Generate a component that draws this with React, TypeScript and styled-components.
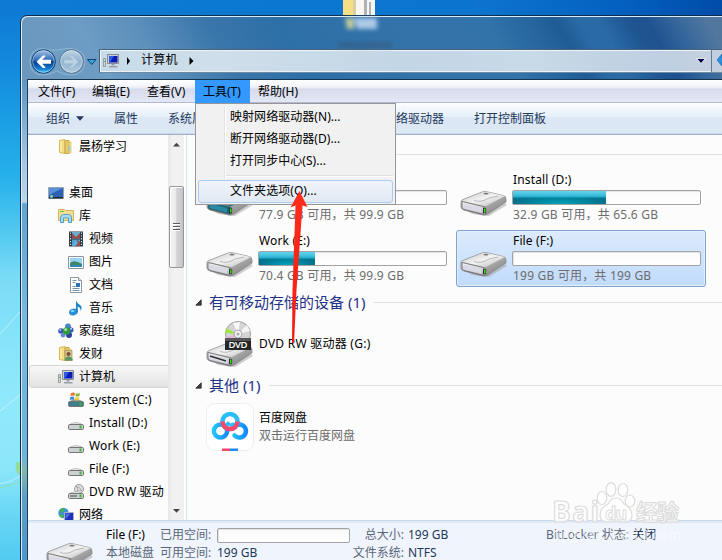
import React from "react";
import styled, { createGlobalStyle, css } from "styled-components";

const Global = createGlobalStyle`
  html, body { margin: 0; padding: 0; }
  body {
    width: 722px; height: 560px; overflow: hidden;
    font-family: "Noto Sans", "Noto Sans CJK SC", sans-serif;
    font-size: 12px; line-height: 16px; color: #000;
  }
  * { box-sizing: border-box; }
  svg { display: block; flex: none; }
`;

/* ---------- desktop and window frame ---------- */

const Desktop = styled.div`
  position: relative;
  width: 722px;
  height: 560px;
  overflow: hidden;
  padding: 15px 0 0 20px;
  background:
    linear-gradient(90deg, #0f7ad4 0, #0b78d2 200px, #0c74ce 480px, #0460c0 620px, #004ca8 722px) 0 0 / 722px 16px no-repeat,
    linear-gradient(180deg, #0f7ad4 0, #1288dc 60px, #1da2e6 130px, #25b0ea 175px, #4cc6f0 225px, #7cdcf7 280px, #86e4fa 340px, #90e8fb 400px, #8ce6fa 470px, #6bd8f6 510px, #52caf2 560px);
`;

const DesktopArt = styled.svg`
  position: absolute;
  left: 0;
  top: 0;
`;

const Window = styled.div`
  position: relative;
  display: flex;
  flex-direction: column;
  width: 720px;
  height: 560px;
  padding-left: 6px;
  border: 1px solid #0d2f4d;
  border-radius: 7px 0 0 0;
  box-shadow: inset 1px 1px 0 #d9ebf7;
  background:
    linear-gradient(180deg, transparent 0, transparent 60px, #a9c8e2 150px, #bdd6ea 186px, #63a3d2 188px, #7ab8e0 300px, #6fb2dd 440px, #7fb8a8 455px, #5f9fca 480px, #4f95c8 545px) 1px 0 / 5px 100% no-repeat,
    linear-gradient(60deg, #6b97bd 16px, #6d9cc4 77px, #5c8fbb 129px, #3a76aa 189px, #2d6fa7 250px, #3473aa 362px, #3273aa 432px, #22609a 484px, #1f5b95 492px, #2a6aa5 512px, #2a6aa5 530px, #1f5592 556px, #1f5290 572px, #33659b 594px, #52779f 624px) 0 0 / 702px 64px no-repeat,
    #5b94bf;
`;

const TitleBar = styled.div`
  flex: none;
  height: 33px;
`;

const AddressRow = styled.div`
  flex: none;
  display: flex;
  height: 31px;
`;

const NavButtons = styled.div`
  width: 72px;
  height: 28px;
  margin-top: -2px;
  padding-left: 1px;
`;

const AddressBox = styled.div`
  display: flex;
  align-items: center;
  width: 613px;
  height: 24px;
  border: 1px solid #46637e;
  border-right-color: #647a90;
  border-bottom-color: #6f8ba3;
  box-shadow: inset 0 1px 0 #eef5fa, inset 1px 0 0 #eef5fa, inset 0 -1px 0 #eaf2f8;
  background: linear-gradient(90deg, #c7dbea 0, #cfdeea 120px, #c3d6e6 300px, #c8d9e7 430px, #bdcfe1 560px, #c5d0df 613px);
`;

const AddressIcon = styled.div`
  width: 22px;
  padding-left: 3px;
`;

const Crumb = styled.div`
  height: 18px;
  line-height: 16px;
  padding: 0 11px 0 11px;
  letter-spacing: 0.2px;
`;

const AddressEnd = styled.div`
  margin-left: auto;
  padding: 0 5px 0 0;
`;

const RefreshBox = styled.div`
  flex: 1;
  height: 24px;
  border-top: 1px solid #46637e;
  border-bottom: 1px solid #6f8ba3;
  background: #c3cfde;
  padding: 4px 0 0 5px;
`;

const Client = styled.div`
  flex: 1;
  display: flex;
  flex-direction: column;
  margin-top: -1px;
  border-left: 1px solid #1b405f;
  border-top: 1px solid #16324b;
  background: #fcfcfc;
`;

/* ---------- menu bar and toolbar ---------- */

const MenuBar = styled.div`
  flex: none;
  display: flex;
  height: 23px;
  padding-left: 2px;
  border-bottom: 1px solid #b3b9d2;
  background: linear-gradient(180deg, #fff 0, #f3f5fa 6px, #e9ecf5 8px, #d6dbec 9px, #dde1f0 16px, #e4e7f5 22px);
`;

const MenuEntry = styled.div<{ $w: number; $open?: boolean }>`
  position: relative;
  width: ${(p) => p.$w}px;
  height: 23px;
  padding-left: 8px;
  line-height: 24px;
  white-space: nowrap;
  background: ${(p) => (p.$open ? "#3399ff" : "transparent")};
`;

const Dropdown = styled.div`
  position: absolute;
  z-index: 5;
  left: 0;
  top: 23px;
  width: 201px;
  height: 102px;
  padding: 3px 2px;
  border: 1px solid #979797;
  background:
    linear-gradient(90deg, #e2e3e3 50%, #fff 50%) 28px 2px / 2px 96px no-repeat,
    #f1f1f1;
`;

const DropItem = styled.div<{ $hot?: boolean }>`
  height: 22px;
  padding-left: 32px;
  line-height: 20px;
  letter-spacing: 0.05px;
  ${(p) =>
    p.$hot &&
    css`
      height: 23px;
      padding-left: 31px;
      line-height: 19px;
      border: 1px solid #a8cdf0;
      border-radius: 3px;
      background: linear-gradient(180deg, rgba(240,245,252,.8), rgba(221,231,243,.8));
    `}
`;

const DropLine = styled.div`
  height: 2px;
  margin: 2px 0 3px 28px;
  border-top: 1px solid #e0e0e0;
  background: #fff;
`;

const Toolbar = styled.div`
  flex: none;
  display: flex;
  align-items: center;
  height: 32px;
  padding: 0 0 0 18px;
  color: #1e395b;
  border-bottom: 1px solid #a0afc3;
  box-shadow: inset 0 -1px 0 #c9d8ec;
  background: linear-gradient(180deg, #fdfeff 0, #eef5fc 8px, #e5effa 14px, #dce6f4 15px, #dde8f5 30px);
`;

const Tool = styled.div<{ $w: number }>`
  display: flex;
  align-items: center;
  gap: 6px;
  width: ${(p) => p.$w}px;
  white-space: nowrap;
`;

/* ---------- navigation tree ---------- */

const Body = styled.div`
  flex: none;
  display: flex;
  height: 385px;
`;

const Tree = styled.div`
  width: 140px;
  height: 385px;
  overflow: hidden;
`;

const TreeRow = styled.div<{ $level: number; $selected?: boolean; $gap?: number }>`
  display: flex;
  align-items: center;
  gap: 5px;
  width: 160px;
  height: 23px;
  margin-left: 1px;
  margin-bottom: ${(p) => p.$gap || 0}px;
  padding-left: ${(p) => 8 + p.$level * 10}px;
  white-space: nowrap;
  border: 1px solid transparent;
  ${(p) =>
    p.$selected &&
    css`
      border-color: #d5d5d5;
      border-radius: 3px;
      background: linear-gradient(180deg, #f7f7f7, #e3e3e3);
    `}
`;

const TreeText = styled.span<{ $ls?: number }>`
  letter-spacing: ${(p) => p.$ls || 0}px;
`;

const ScrollTrack = styled.div`
  display: flex;
  flex-direction: column;
  align-items: center;
  width: 16px;
  padding: 7px 0 3px;
  background: linear-gradient(90deg, #e8e8e8, #f2f2f2 5px, #f0f0f0);
`;

const Thumb = styled.div`
  display: flex;
  flex-direction: column;
  justify-content: center;
  align-items: center;
  gap: 1px;
  width: 15px;
  height: 82px;
  margin: 39px 0 auto;
  border: 1px solid #969696;
  border-radius: 2px;
  background: linear-gradient(90deg, #f5f5f5 0, #e9e9ea 45%, #d6d6d9 50%, #c4c5c9 100%);
  box-shadow: inset 1px 1px 0 #fff;
`;

const Grip = styled.div`
  width: 7px;
  height: 2px;
  border-top: 1px solid #5b5b5b;
  background: #fff;
`;

const Splitter = styled.div`
  width: 3px;
  border-right: 1px solid #d3e2f3;
  background: #fff;
`;

/* ---------- file list ---------- */

const Main = styled.div`
  flex: 1;
  display: flex;
  flex-direction: column;
  min-width: 0;
  padding: 9px 0 0 8px;
`;

const Group = styled.div<{ $mt?: number }>`
  display: flex;
  align-items: center;
  height: 20px;
  margin-top: ${(p) => p.$mt || 0}px;
`;

const GroupTitle = styled.div<{ $w: number }>`
  width: ${(p) => p.$w}px;
  padding-left: 7px;
  font-size: 15px;
  line-height: 20px;
  color: #1e3287;
  white-space: nowrap;
`;

const Rule = styled.div`
  flex: 1;
  height: 1px;
  background: #e2e2e2;
`;

const Tiles = styled.div`
  display: grid;
  grid-template-columns: 250px 250px;
  grid-auto-rows: 57px;
  gap: 4px;
  margin: 5px 0 0 7px;
`;

const Tile = styled.div<{ $selected?: boolean }>`
  display: flex;
  padding: 1px 0 0 3px;
  border: 1px solid transparent;
  ${(p) =>
    p.$selected &&
    css`
      border-color: #7da2ce;
      border-radius: 3px;
      box-shadow: inset 0 0 0 1px #e4effd;
      background: linear-gradient(180deg, #dcebfc, #c1dbfc);
    `}
`;

const TileIcon = styled.div`
  width: 52px;
  padding-top: 18px;
`;

const TileInfo = styled.div`
  display: flex;
  flex-direction: column;
  white-space: nowrap;
`;

const TileName = styled.div`
  height: 19px;
  line-height: 17px;
  padding-left: 1px;
  letter-spacing: 0.15px;
`;

const Bar = styled.div<{ $w: number }>`
  width: ${(p) => p.$w}px;
  height: 15px;
  border: 1px solid #a3a3a3;
  border-radius: 2px;
  background: linear-gradient(180deg, #fafafa, #fff);
  box-shadow: inset 1px 1px 0 #e4e4e4;
`;

const Fill = styled.div`
  height: 13px;
  background:
    radial-gradient(ellipse 50% 60% at 50% 100%, rgba(0,170,195,.9), transparent),
    linear-gradient(180deg, #62d3ec 0, #4bc5e2 3px, #23adcc 6px, #047690 7px, #066f8b 13px);
`;

const TileSub = styled.div`
  line-height: 20px;
  padding-left: 1px;
  letter-spacing: 0.2px;
  color: #6d6d6d;
`;

const WideItem = styled.div<{ $h: number; $mt: number }>`
  display: flex;
  align-items: center;
  gap: 5px;
  height: ${(p) => p.$h}px;
  margin: ${(p) => p.$mt}px 0 0 11px;
  white-space: nowrap;
`;

const Muted = styled.div`
  color: #6d6d6d;
  line-height: 18px;
`;

const PanLabel = styled.div<{ $ls?: number }>`
  line-height: 18px;
  letter-spacing: ${(p) => p.$ls || 0}px;
`;

/* ---------- details pane ---------- */

const Details = styled.div`
  flex: none;
  display: flex;
  height: 60px;
  padding-left: 18px;
  border-top: 1px solid #c9d8ea;
  box-shadow: inset 0 2px 0 #e1eaf5;
  background: #f0f4fc;
`;

const DetailIcon = styled.div`
  width: 60px;
  padding-top: 20px;
`;

const DetailGrid = styled.div`
  display: grid;
  grid-template-columns: 54px 57px 135px 56px 138px auto;
  grid-template-rows: 18px 18px;
  padding-top: 5px;
  align-items: center;
  color: #1e395b;
  white-space: nowrap;
`;

const Label = styled.span<{ $right?: boolean }>`
  color: #5a6779;
  text-align: ${(p) => (p.$right ? "right" : "left")};
  padding-right: ${(p) => (p.$right ? 4 : 0)}px;
`;

const Dark = styled.span`
  color: #000;
`;

const Overlay = styled.svg`
  position: absolute;
  left: 0;
  top: 0;
  z-index: 10;
`;

/* ---------- icons ---------- */

const DriveIcon = ({ windows }: { windows?: boolean }) => (
  <svg width="47" height="28" viewBox="0 0 47 28">
    <defs>
      <linearGradient id="dtop" x1="0" y1="0" x2="1" y2="1">
        <stop offset="0" stopColor="#c8c8c8" />
        <stop offset=".5" stopColor="#f3f3f3" />
        <stop offset="1" stopColor="#b5b5b5" />
      </linearGradient>
      <linearGradient id="dside" x1="0" y1="0" x2="1" y2="1">
        <stop offset="0" stopColor="#ededed" />
        <stop offset="1" stopColor="#757575" />
      </linearGradient>
      <linearGradient id="dfront" x1="0" y1="0" x2="0" y2="1">
        <stop offset="0" stopColor="#f8f8fb" />
        <stop offset="1" stopColor="#b4b4be" />
      </linearGradient>
    </defs>
    <path d="M4 20 24 26 45 14 47 16 29 27 12 25Z" fill="#9a9a9a" opacity=".45" />
    <path d="M1 13 Q1 11 3 10.500 L22 3 Q25 2 28 3 L43 6.500 Q46 7 46 10 L46 13 28 25 Q26 26.500 23 26 L4 21 Q1 20 1 18Z" fill="url(#dside)" stroke="#8a8a8a" strokeWidth=".8" />
    <path d="M2 11.500 23 3 Q25 2.500 27 3 L45 7 27 16.500 Q25 17.500 22 16.800Z" fill={windows ? "#257788" : "url(#dtop)"} />
    <path d="M14 11.500Q21 14 29 9L38 7" stroke="#aaa" fill="none" strokeWidth=".8" />
    <ellipse cx="26" cy="4.600" rx="2.600" ry=".9" fill="#777" />
    <path d="M2 12.500 22 17.200 Q26 18 26 20 L25.500 24.500 Q25 25.500 22 25 L4 20.500 Q2 20 2 18Z" fill={windows ? "#17647a" : "url(#dfront)"} stroke="#666" strokeWidth=".8" />
    <path d="M3.500 14.500 21 19 21 23.500 5 19.500 Q3.500 19 3.500 17.500Z" fill={windows ? "#278aa2" : "#dadae6"} />
    <path d="M23 18.500 26 19.200 26 24 23 24.200Z" fill="#303030" />
    <path d="M24 19.500h1.500v4H24z" fill="#35e20c" />
  </svg>
);

const DvdIcon = () => (
  <svg width="48" height="47" viewBox="0 0 48 47">
    <g transform="translate(0 20)">
      <DriveIcon />
    </g>
    <path d="M4 36 20 41" stroke="#333" strokeWidth="1.500" />
    <circle cx="32" cy="14" r="12.500" fill="#d4d4d4" stroke="#a0a0a0" />
    <path d="M32 14 20 8 19 13Z" fill="#a3e34d" />
    <path d="M32 14 20 17 23 22Z" fill="#e5b6dd" />
    <path d="M32 14 41 5 44 11Z" fill="#f5f5f5" />
    <path d="M32 14 27 3 34 2Z" fill="#f8f8f8" />
    <circle cx="32" cy="14" r="4" fill="#f0f0f0" stroke="#999" strokeWidth=".8" />
    <circle cx="32" cy="14" r="1.500" fill="#aaa" />
    <path d="M19 18h26v12H19z" fill="#262626" />
    <path d="M19 18h26v3H19z" fill="#555" />
    <text x="32" y="27.500" textAnchor="middle" fontSize="9.500" fontWeight="600" fill="#fff" fontFamily="Open Sans, sans-serif" textLength="19">DVD</text>
  </svg>
);

const PanIcon = () => (
  <svg width="48" height="48" viewBox="0 0 48 48">
    <defs>
      <linearGradient id="pb" x1="0" x2="1">
        <stop offset="0" stopColor="#25c4fa" />
        <stop offset="1" stopColor="#168bf8" />
      </linearGradient>
    </defs>
    <rect x=".5" y=".5" width="47" height="47" rx="8" fill="#fff" stroke="#ededed" />
    <g fill="none" strokeWidth="4.500" strokeLinecap="round">
      <circle cx="14.500" cy="28" r="6.600" stroke="url(#pb)" />
      <path d="M19 24 22 21" stroke="#25bdfa" />
      <path d="M26 22 34 21.400A6.600 6.600 0 1 1 28.500 32.500" stroke="url(#pb)" />
      <circle cx="24" cy="18.500" r="7.500" stroke="#2dbcfa" />
      <path d="M16.500 18.500A7.500 7.500 0 0 0 31.500 18.500" stroke="#f7496f" strokeLinecap="butt" />
    </g>
    <path d="M16 45.500h8V48h-8z" fill="#fb456b" />
    <path d="M24 45.500h8V48h-8z" fill="#1c8cf8" />
  </svg>
);

const Svg16 = ({ children }: { children: React.ReactNode }) => (
  <svg width="16" height="16" viewBox="0 0 16 16">{children}</svg>
);

const FolderIcon = ({ person }: { person?: boolean }) => (
  <Svg16>
    <path d="M1.500 1.500 7 .5 7 14.500 1.500 13.500Z" fill="#f3dc82" stroke="#d7b956" />
    <path d="M7 1.500h4v13H7z" fill="#e7c969" stroke="#c9a94c" />
    <path d="M3 2v11" stroke="#fff3b8" />
    <path d="M11 3h2v11h-2z" fill="#f5e397" stroke="#d7b956" strokeWidth=".6" />
    {person ? (
      <>
        <path d="M7 4.500h7v10H7z" fill="#d3c596" stroke="#a49262" strokeWidth=".7" />
        <circle cx="10.500" cy="8" r="2" fill="#7c5030" />
        <path d="M7 14.500Q7 10.500 10.500 10.500T15 14.500Z" fill="#579a60" />
      </>
    ) : (
      <path d="M11.500 7v5" stroke="#8ed0ea" strokeWidth="1.500" />
    )}
  </Svg16>
);

const ComputerIcon = () => (
  <Svg16>
    <path d="M.5 5.500h2v8h-2z" fill="#d5d8d2" stroke="#8c918c" strokeWidth=".8" />
    <path d="M1 8.500h1" stroke="#33c234" />
    <path d="M4.500 1.500h11v9h-11z" fill="#c9ccd2" stroke="#868b94" />
    <path d="M6 3h8.500v6.500H6z" fill="#0a1bb5" />
    <path d="M6 3h5L7 9.500H6z" fill="#2e5be2" />
    <path d="M8.500 11h3v1.500h-3zM6 13h8.500v1.500H6z" fill="#9a9da3" />
  </Svg16>
);

const DesktopIcon = () => (
  <Svg16>
    <path d="M.5 2.500h15v11H.5z" fill="#2d61b4" stroke="#9aa3b0" />
    <path d="M1 3h14L1 10z" fill="#5790d8" />
    <path d="M1 12h14v1.500H1z" fill="#202a35" />
    <circle cx="3.500" cy="11.500" r="1.700" fill="#4fb1e2" />
    <path d="M3 10.500h1.500V12H3z" fill="#e8ca35" />
  </Svg16>
);

const LibraryIcon = () => (
  <Svg16>
    <path d="M.5 1.500h6l1 1h8v10H.5z" fill="#f2df96" stroke="#cfb45b" />
    <path d="M2 3.500h4" stroke="#69bd46" />
    <path d="M2.500 14.500V10Q3 6.500 5.500 6.500h5Q13.500 6.500 13.500 10v4.500h-3V10h-5v4.500z" fill="#a9dcf4" stroke="#4d9ec6" />
  </Svg16>
);

const VideoIcon = () => (
  <Svg16>
    <path d="M1 .5h14v15H1z" fill="#2b3742" />
    <path d="M4 1h8v6.500H4z" fill="#6faed4" />
    <path d="M4 8.500h8V15H4z" fill="#5aa0cd" />
    <path d="M4 2 8 6 12 2V7.500H4zM9 9 12 11V15H6z" fill="#9c4c48" />
    <path d="M8 9 10 12 7 15H4z" fill="#4eb6ea" />
    <path d="M2.500 1.500v13M13.500 1.500v13" stroke="#dde4e8" strokeWidth="1.200" strokeDasharray="1.300 1.500" />
  </Svg16>
);

const PictureIcon = () => (
  <Svg16>
    <path d="M.5 2.500h15v12H.5z" fill="#fff" stroke="#8b949c" />
    <path d="M2 4h12v9H2z" fill="#9ad3f1" />
    <path d="M2 9Q6 5 14 10v3H2z" fill="#3f8767" />
    <path d="M2 11h12v2H2z" fill="#2e87b8" />
  </Svg16>
);

const DocIcon = () => (
  <Svg16>
    <path d="M2.500 .5h8l3 3v12h-11z" fill="#fff" stroke="#8d979f" />
    <path d="M10.500 .5v3h3" fill="#dfe6ea" stroke="#8d979f" />
    <path d="M4.500 3.500h4M4.500 5.500h3M4.500 9.500h3M4.500 11.500h7M4.500 13.500h7" stroke="#7795ad" />
    <path d="M8 6h4v4H8z" fill="#2a74b7" />
  </Svg16>
);

const MusicIcon = () => (
  <Svg16>
    <ellipse cx="5.500" cy="12" rx="4.500" ry="3.300" fill="#2b8fd8" transform="rotate(-15 5.500 12)" />
    <path d="M8 12V.5Q9 3.500 12 5 15 7 12.500 11 13 7.500 9.700 6.500V12z" fill="#1c83cf" />
    <ellipse cx="4.500" cy="11" rx="2" ry="1" fill="#8fd3f7" />
  </Svg16>
);

const HomegroupIcon = () => (
  <Svg16>
    <circle cx="3" cy="8" r="2.800" fill="#3a55b8" />
    <circle cx="10" cy="3.500" r="3" fill="#4e86c9" />
    <circle cx="12.700" cy="7" r="2.800" fill="#3558b2" />
    <circle cx="11" cy="12" r="3" fill="#2c429d" />
    <circle cx="5" cy="12.300" r="2.300" fill="#6689cc" />
    <circle cx="8.500" cy="8" r="3.700" fill="#2f9b3d" />
    <circle cx="7.700" cy="6.600" r="1.500" fill="#a7e2a2" />
    <circle cx="2.300" cy="7" r="1" fill="#b6c8f0" />
    <circle cx="13" cy="5.800" r="1" fill="#bfd2f5" />
  </Svg16>
);

const SmallDrive = ({ kind }: { kind?: "win" | "dvd" }) => (
  <Svg16>
    {kind === "dvd" && (
      <>
        <circle cx="11" cy="5" r="4.500" fill="#dcdcdc" stroke="#888" strokeWidth=".8" />
        <path d="M11 5 8 2M11 5l3 2M11 5l-3 3" stroke="#929292" />
        <circle cx="11" cy="5" r="1.300" fill="#fff" stroke="#888" strokeWidth=".6" />
      </>
    )}
    <path d="M3 8.500Q8 6.500 13 8.500L15 10.500H1z" fill={kind === "win" ? "#6c9da4" : "#e6e6e6"} stroke="#a4a4a4" strokeWidth=".6" />
    <rect x=".5" y="9.500" width="15" height="5" rx="1.200" fill={kind === "win" ? "#3f7f8c" : "#cfcfd6"} stroke="#747474" />
    {kind === "dvd" && <path d="M2 12h7" stroke="#444" />}
    <path d="M11.500 10.500h2v3h-2z" fill="#3fb52b" />
    {kind === "win" && (
      <>
        <path d="M3 1Q5 0 7 1L6.500 4Q4.500 3 2.500 4z" fill="#ee7132" />
        <path d="M8 1.200Q10 2 12 1L11.400 4Q9.500 5 7.500 4.200z" fill="#80b93a" />
        <path d="M2.300 5Q4.300 4 6.300 5L5.800 8Q3.800 7 1.800 8z" fill="#3c8cd3" />
        <path d="M7.300 5.200Q9.300 6 11.300 5L10.700 8Q8.700 9 6.700 8.200z" fill="#f3c62e" />
      </>
    )}
  </Svg16>
);

const NetworkIcon = () => (
  <Svg16>
    <circle cx="5.500" cy="6" r="5.200" fill="#3f8fe0" />
    <path d="M2 3Q5 0 7 2L5 5 3 6Zm-1 5 3-1 2 3-2 1Z" fill="#44b63f" />
    <path d="M6.500 5.500h9v8h-9z" fill="#1e2fbb" stroke="#aab1c0" />
    <path d="M7.500 6.500h5l-5 6z" fill="#4b71e6" />
    <path d="M8 14h6v1.500H8z" fill="#7d828c" />
  </Svg16>
);

const Nav = () => (
  <svg width="71" height="30" viewBox="0 0 71 30">
    <defs>
      <linearGradient id="nb" x1="0" y1="0" x2="0" y2="1">
        <stop offset="0" stopColor="#a9c6e6" />
        <stop offset=".45" stopColor="#2c69b4" />
        <stop offset=".52" stopColor="#083e8e" />
        <stop offset=".8" stopColor="#1479cf" />
        <stop offset="1" stopColor="#4fd4fb" />
      </linearGradient>
      <linearGradient id="nf" x1="0" y1="0" x2="0" y2="1">
        <stop offset="0" stopColor="#c3d6e6" />
        <stop offset=".5" stopColor="#8fb2cd" />
        <stop offset="1" stopColor="#b3cde0" />
      </linearGradient>
    </defs>
    <path d="M2 15Q2 1.500 15 1.500Q22 4 29 3Q36 1.500 43 1.500Q58 3 57 15Q56 28 43 28Q36 28 29 24Q22 28 15 28Q2 28 2 15Z" fill="#6f9cc1" stroke="#8fb5d3" />
    <circle cx="15.500" cy="14.500" r="11.800" fill="url(#nb)" stroke="#123e71" />
    <circle cx="15.500" cy="14.500" r="10.800" fill="none" stroke="#b9dcf5" strokeOpacity=".6" />
    <path d="M8.500 14.800 14.800 8.600 17.300 8.600 17.300 9.500 14.200 12.800H23V16.800H14.200L17.300 20.100V21H14.800Z" fill="#fff" />
    <circle cx="43.500" cy="14.500" r="11.800" fill="url(#nf)" stroke="#4f7294" />
    <circle cx="43.500" cy="14.500" r="10.800" fill="none" stroke="#d4e4ef" strokeOpacity=".7" />
    <path d="M50.500 14.800 44.200 8.600H41.700V9.500L44.800 12.800H36V16.800H44.800L41.700 20.100V21H44.200Z" fill="#bcd2e2" stroke="#9bb8cf" strokeWidth=".6" />
    <path d="M59.500 12.500H68L63.700 17.500Z" fill="#3ba5dd" stroke="#0d4470" />
  </svg>
);

const CrumbArrow = () => (
  <svg width="5" height="8" viewBox="0 0 5 8">
    <path d="M.5 0 4.500 4 .5 8Z" fill="#000" />
  </svg>
);

const GroupArrow = () => (
  <svg width="7" height="7" viewBox="0 0 7 7">
    <path d="M6.200 .8V6.200H.8Z" fill="#404040" stroke="#262626" strokeWidth=".8" />
  </svg>
);

const tree = [
  { icon: <FolderIcon />, text: "晨杨学习", level: 2, gap: 23 },
  { icon: <DesktopIcon />, text: "桌面", level: 1 },
  { icon: <LibraryIcon />, text: "库", level: 2 },
  { icon: <VideoIcon />, text: "视频", level: 3 },
  { icon: <PictureIcon />, text: "图片", level: 3 },
  { icon: <DocIcon />, text: "文档", level: 3 },
  { icon: <MusicIcon />, text: "音乐", level: 3 },
  { icon: <HomegroupIcon />, text: "家庭组", level: 2 },
  { icon: <FolderIcon person />, text: "发财", level: 2 },
  { icon: <ComputerIcon />, text: "计算机", level: 2, selected: true },
  { icon: <SmallDrive kind="win" />, text: "system (C:)", level: 3 },
  { icon: <SmallDrive />, text: "Install (D:)", level: 3 },
  { icon: <SmallDrive />, text: "Work (E:)", level: 3 },
  { icon: <SmallDrive />, text: "File (F:)", level: 3 },
  { icon: <SmallDrive kind="dvd" />, text: "DVD RW 驱动", level: 3 },
  { icon: <NetworkIcon />, text: "网络", level: 2 },
];

const drives = [
  { name: "", used: 22, sub: "77.9 GB 可用，共 99.9 GB", windows: true },
  { name: "Install (D:)", used: 49.5, sub: "32.9 GB 可用，共 65.6 GB" },
  { name: "Work (E:)", used: 30, sub: "70.4 GB 可用，共 99.9 GB" },
  { name: "File (F:)", used: 0, sub: "199 GB 可用，共 199 GB", selected: true },
];

export default function App() {
  return (
    <Desktop>
      <Global />
      <DesktopArt width="722" height="560" viewBox="0 0 722 560">
        <path d="M343 0h11v16h-11z" fill="#f6df83" />
        <path d="M353 0h22v16h-22z" fill="#f7f6f1" />
        <path d="M353 0h3v16h-3z" fill="#d8cfa6" />
        <path d="M364 0h3v16h-3zM369 2h2v14h-2z" fill="#aeb2b8" />
        <path d="M0 334 20 312M0 411 20 395M0 484Q12 482 20 476" stroke="#d2f6ff" strokeOpacity=".7" fill="none" />
        <path d="M0 488 20 482M17 462Q14 470 20 475V463Z" stroke="#8fdcae" fill="#98dc86" />
      </DesktopArt>
      <Window>
        <TitleBar />
        <AddressRow>
          <NavButtons><Nav /></NavButtons>
          <AddressBox>
            <AddressIcon><ComputerIcon /></AddressIcon>
            <svg width="8" height="8" viewBox="0 0 8 8"><path d="M5 0 8 4 5 8Z" /></svg>
            <Crumb>计算机</Crumb>
            <CrumbArrow />
            <AddressEnd>
              <svg width="10" height="6" viewBox="0 0 10 6"><path d="M.5 .5H9.500L5 5.500Z" fill="#05054d" stroke="#fff" strokeWidth=".8" /></svg>
            </AddressEnd>
          </AddressBox>
          <RefreshBox>
            <svg width="16" height="14" viewBox="0 0 16 14"><path d="M0 6 5 0V4H9V8H5V12Z" fill="#2b8fdc" stroke="#1767a8" strokeWidth=".7" /></svg>
          </RefreshBox>
        </AddressRow>
        <Client>
          <MenuBar>
            <MenuEntry $w={54}>文件(F)</MenuEntry>
            <MenuEntry $w={55}>编辑(E)</MenuEntry>
            <MenuEntry $w={56}>查看(V)</MenuEntry>
            <MenuEntry $w={55} $open>
              工具(T)
              <Dropdown>
                <DropItem>映射网络驱动器(N)...</DropItem>
                <DropItem>断开网络驱动器(D)...</DropItem>
                <DropItem>打开同步中心(S)...</DropItem>
                <DropLine />
                <DropItem $hot>文件夹选项(O)...</DropItem>
              </Dropdown>
            </MenuEntry>
            <MenuEntry $w={60}>帮助(H)</MenuEntry>
          </MenuBar>
          <Toolbar>
            <Tool $w={68}>
              组织
              <svg width="8" height="5" viewBox="0 0 8 5"><path d="M0 .3H8L4 4.800Z" fill="#1e395b" /></svg>
            </Tool>
            <Tool $w={54}>属性</Tool>
            <Tool $w={192}>系统属性</Tool>
            <Tool $w={114}>映射网络驱动器</Tool>
            <Tool $w={90}>打开控制面板</Tool>
          </Toolbar>
          <Body>
            <Tree>
              {tree.map((t) => (
                <TreeRow key={t.text} $level={t.level} $gap={t.gap} $selected={t.selected}>
                  {t.icon}
                  <TreeText $ls={/[a-z]/i.test(t.text) ? 0.15 : 0}>{t.text}</TreeText>
                </TreeRow>
              ))}
            </Tree>
            <ScrollTrack>
              <svg width="7" height="5" viewBox="0 0 7 5"><path d="M0 4.500 3.500 .8 7 4.500Z" fill="#444" /></svg>
              <Thumb><Grip /><Grip /><Grip /></Thumb>
              <svg width="7" height="8" viewBox="0 0 7 8"><path d="M0 0H7L3.500 3.800Z" fill="#444" /></svg>
            </ScrollTrack>
            <Splitter />
            <Main>
              <Group><Rule /></Group>
              <Tiles>
                {drives.map((d, i) => (
                  <Tile key={i} $selected={d.selected}>
                    <TileIcon><DriveIcon windows={d.windows} /></TileIcon>
                    <TileInfo>
                      <TileName>{d.name}</TileName>
                      <Bar $w={189}>{d.used > 0 && <Fill style={{ width: `${d.used}%` }} />}</Bar>
                      <TileSub>{d.sub}</TileSub>
                    </TileInfo>
                  </Tile>
                ))}
              </Tiles>
              <Group $mt={5}>
                <GroupArrow />
                <GroupTitle $w={172}>有可移动存储的设备 (1)</GroupTitle>
                <Rule />
              </Group>
              <WideItem $h={47} $mt={8}>
                <DvdIcon />
                <PanLabel $ls={0.25}>DVD RW 驱动器 (G:)</PanLabel>
              </WideItem>
              <Group $mt={8}>
                <GroupArrow />
                <GroupTitle $w={67}>其他 (1)</GroupTitle>
                <Rule />
              </Group>
              <WideItem $h={48} $mt={8}>
                <PanIcon />
                <div>
                  <PanLabel>百度网盘</PanLabel>
                  <Muted>双击运行百度网盘</Muted>
                </div>
              </WideItem>
            </Main>
          </Body>
          <Details>
            <DetailIcon><DriveIcon /></DetailIcon>
            <DetailGrid>
              <Dark>File (F:)</Dark>
              <Label>已用空间:</Label>
              <Bar $w={133} />
              <Label $right>总大小:</Label>
              <span>199 GB</span>
              <span><Label>BitLocker 状态: </Label>关闭</span>
              <Label>本地磁盘</Label>
              <Label>可用空间:</Label>
              <span>199 GB</span>
              <Label $right>文件系统:</Label>
              <span>NTFS</span>
            </DetailGrid>
          </Details>
        </Client>
      </Window>
      <Overlay width="722" height="560" viewBox="0 0 722 560">
        <defs>
          <filter id="soft" x="-30%" y="-30%" width="160%" height="160%"><feGaussianBlur stdDeviation="2" /></filter>
          <linearGradient id="red" x1="0" y1="0" x2="0" y2="1">
            <stop offset="0" stopColor="#ff2d1c" />
            <stop offset="1" stopColor="#f51b12" />
          </linearGradient>
        </defs>
        <g filter="url(#soft)">
          <path d="M345 18h9v11h-7z" fill="#d6d99e" opacity=".85" />
          <path d="M354 18h23v11h-20z" fill="#b9d4ee" opacity=".9" />
          <path d="M338 43h54v4h-54z" fill="#3b4f68" opacity=".55" />
        </g>
        <path d="M299.500 191 307.500 207 302.500 205.500 296.500 290 294 343 292 343 292.500 290 295.500 205.500 290.500 207.500Z" fill="url(#red)" />
        <g fill="#fff" fillOpacity=".85" stroke="#dcdcdc" strokeWidth="1.200" fontFamily="Open Sans, sans-serif" fontWeight="700">
          <text x="552" y="522" fontSize="28" textLength="47">Bai</text>
          <path d="M600 515Q600 508 608 504 611 498 616 498T624 504Q632 508 632 515 632 523 622 522 616 520 610 522 600 523 600 515Z" />
          <ellipse cx="602" cy="498" rx="4.800" ry="6.500" />
          <ellipse cx="611" cy="489.500" rx="4.800" ry="6.800" />
          <ellipse cx="623" cy="490" rx="4.800" ry="6.500" />
          <ellipse cx="630" cy="501" rx="4.800" ry="6" />
          <text x="605" y="520" fontSize="18" textLength="22" strokeWidth="1">du</text>
          <text x="636" y="520" fontSize="22" textLength="43" fontFamily="Noto Sans CJK SC, sans-serif">经验</text>
          <text x="553" y="539" fontSize="13" textLength="128" fillOpacity=".65" stroke="none" fontWeight="400">jingyan.baidu.com</text>
        </g>
      </Overlay>
    </Desktop>
  );
}
